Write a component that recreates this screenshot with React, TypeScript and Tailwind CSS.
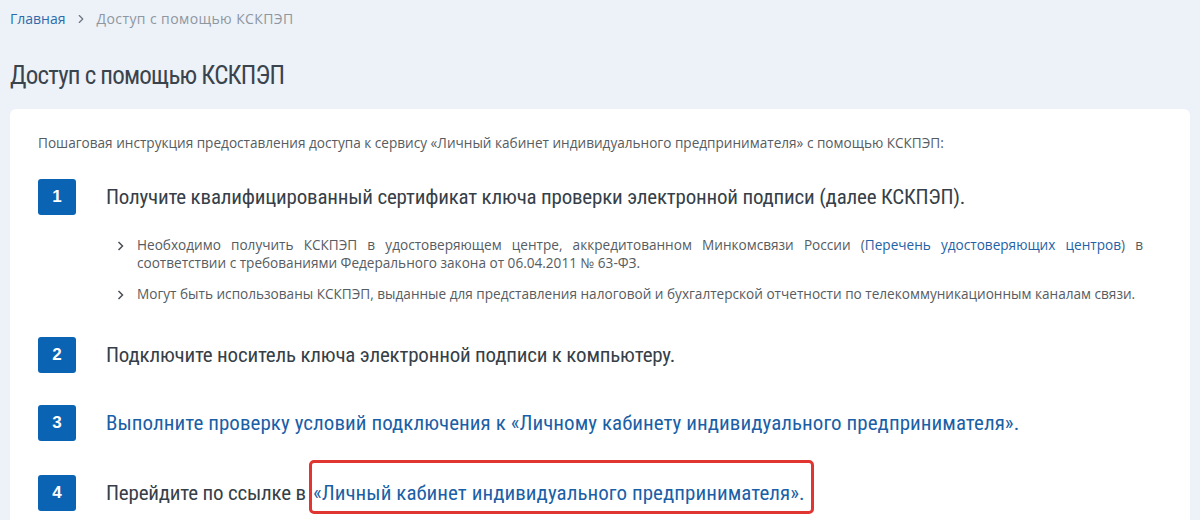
import { ChevronRight } from "lucide-react";

const cond = "font-['Roboto_Condensed','Liberation_Sans_Narrow','DejaVu_Sans_Condensed',Roboto,sans-serif]";
const body = "font-['Open_Sans',sans-serif]";

function StepBox({ n }: { n: number }) {
  return (
    <div className="flex h-9 w-[38px] shrink-0 items-center justify-center rounded-[3px] bg-[#0b63b3] font-['Liberation_Sans',Arial,sans-serif] text-[17px] font-bold text-white">
      {n}
    </div>
  );
}

function Step({ n, className = "", children }: { n: number; className?: string; children: React.ReactNode }) {
  return (
    <div className={`flex items-center gap-[30px] ${className}`}>
      <StepBox n={n} />
      <div className={`${cond} text-[21px] leading-7 tracking-[-0.2px] text-[#363f48]`}>{children}</div>
    </div>
  );
}

function Bullet({ children }: { children: React.ReactNode }) {
  return (
    <li className="flex gap-[12px]">
      <svg viewBox="0 0 8 10" className="mt-[5px] h-[10px] w-[8px] shrink-0" fill="none" stroke="#4a4f55" strokeWidth="1.5">
        <path d="M1.5 1l4 4-4 4" />
      </svg>
      <p className="text-justify">{children}</p>
    </li>
  );
}

export default function App() {
  return (
    <div className={`${body} h-[520px] overflow-hidden bg-[#edf1f8] px-[10px] pt-[9px]`}>
      <nav className="flex items-center text-sm">
        <a className="text-[#2b6cab]">Главная</a>
        <ChevronRight className="ml-[8px] h-3.5 w-3.5 text-[#6b7580]" strokeWidth={2} />
        <span className="ml-[9px] tracking-[0.4px] text-[#8d979f]">Доступ с помощью КСКПЭП</span>
      </nav>

      <h1 className={`${cond} mt-[29px] text-[25px] leading-9 tracking-[-0.8px] text-[#39444d]`}>
        Доступ с помощью КСКПЭП
      </h1>

      <div className="mt-[15px] rounded-md bg-white pb-10 pl-[28px] pr-[47px] pt-[24px]">
        <p className="text-[13.6px] leading-5 text-[#565c62]">
          Пошаговая инструкция предоставления доступа к сервису «Личный кабинет индивидуального предпринимателя» с помощью КСКПЭП:
        </p>

        <div className="mt-[26px] flex flex-col">
          <Step n={1}>
            Получите квалифицированный сертификат ключа проверки электронной подписи (далее КСКПЭП).
          </Step>

          <ul className="mt-[21px] flex flex-col gap-[13px] pl-[79px] text-[13.6px] leading-[18px] text-[#565c62]">
            <Bullet>
              Необходимо получить КСКПЭП в удостоверяющем центре, аккредитованном Минкомсвязи России (
              <a className="text-[#1f62a6]">Перечень удостоверяющих центров</a>) в соответствии с требованиями Федерального закона от 06.04.2011 № 63-ФЗ.
            </Bullet>
            <Bullet>
              Могут быть использованы КСКПЭП, выданные для представления налоговой и бухгалтерской отчетности по телекоммуникационным каналам связи.
            </Bullet>
          </ul>

          <Step n={2} className="mt-[34px]">
            Подключите носитель ключа электронной подписи к компьютеру.
          </Step>
          <Step n={3} className="mt-[32px]">
            <a className="tracking-[0.05px] text-[#1b5fa6]">
              Выполните проверку условий подключения к «Личному кабинету индивидуального предпринимателя».
            </a>
          </Step>
          <Step n={4} className="mt-[34px]">
            Перейдите по ссылке в
            <a className="relative ml-[7px] inline-block tracking-[0.05px] text-[#1b5fa6]">
              «Личный кабинет индивидуального предпринимателя».
              <span className="absolute -bottom-[7px] -left-[4px] -right-[9px] -top-[19px] rounded-[5px] border-[3px] border-[#e03530]" />
            </a>
          </Step>
        </div>
      </div>
    </div>
  );
}
